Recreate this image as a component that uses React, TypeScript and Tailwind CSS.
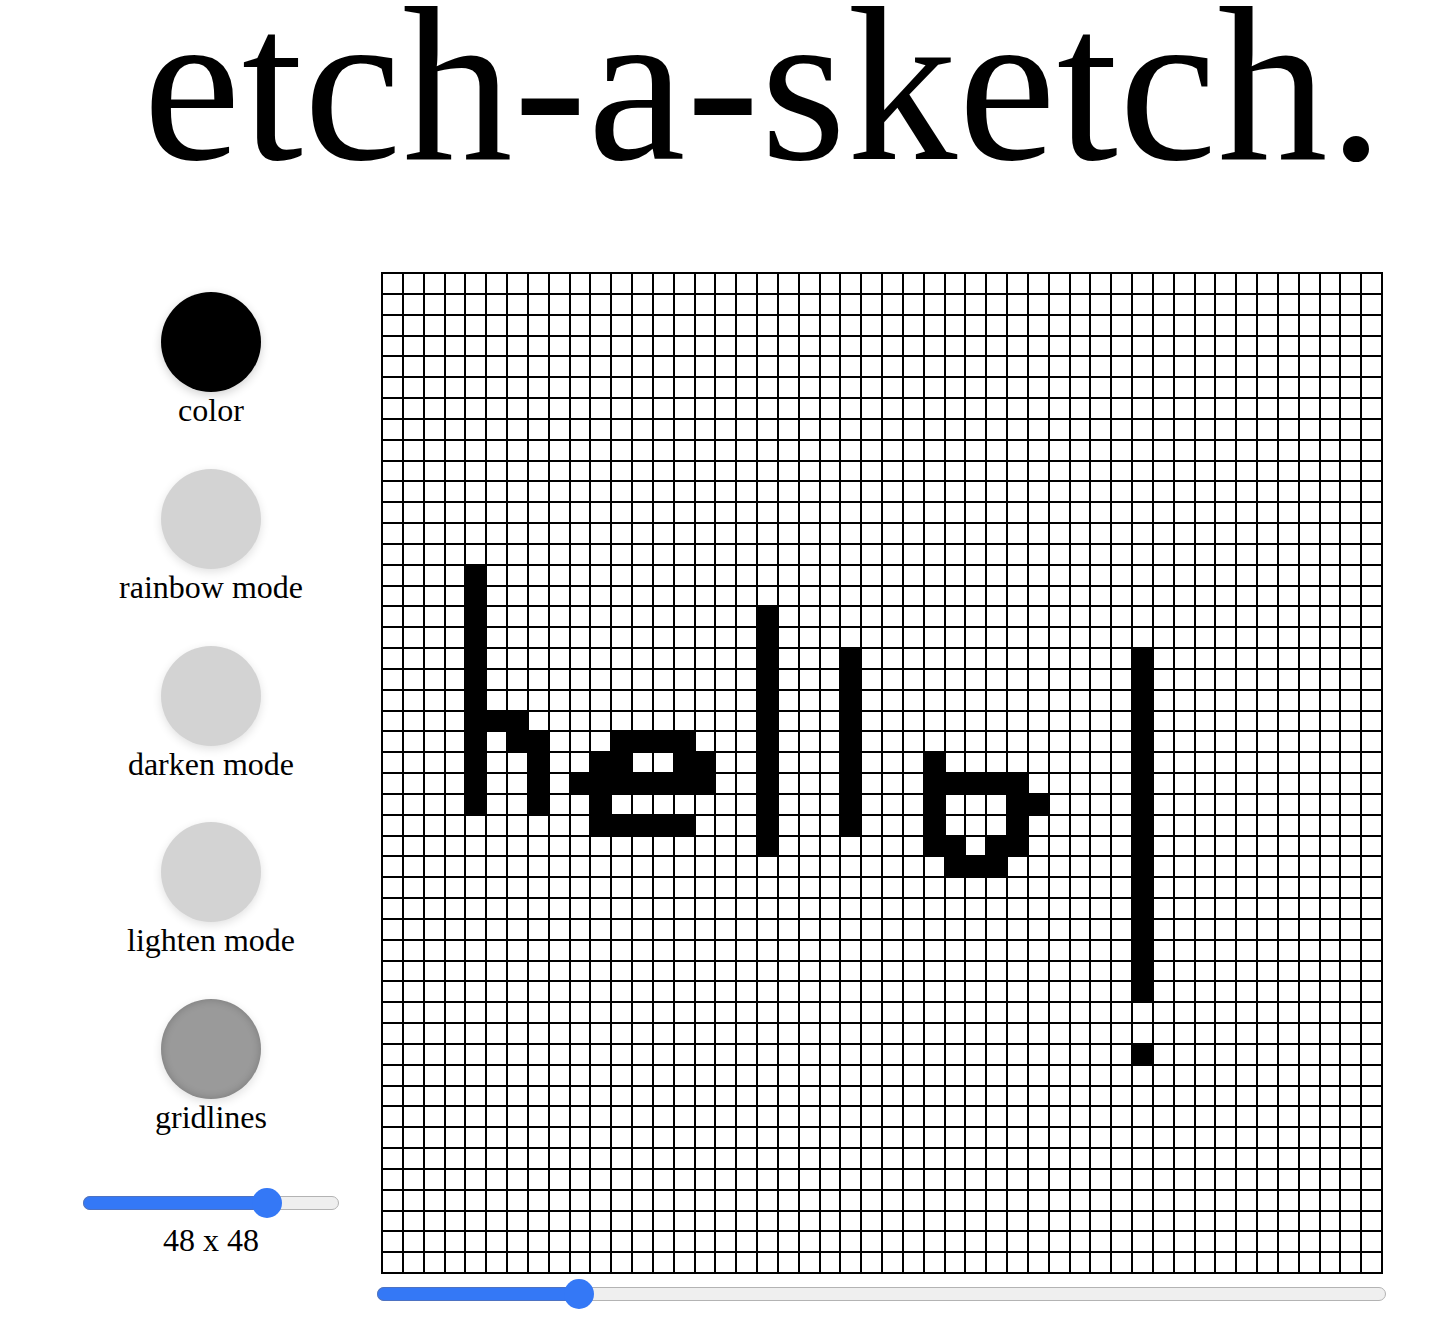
const SIZE = 48;

// drawn cells, as [row, col]
const inked = new Set<string>();
const ink = (r: number, c: number) => inked.add(`${r}-${c}`);
const vline = (c: number, r0: number, r1: number) => {
	for (let r = r0; r <= r1; r++) ink(r, c);
};
const hline = (r: number, c0: number, c1: number) => {
	for (let c = c0; c <= c1; c++) ink(r, c);
};

// h
vline(4, 14, 25);
hline(21, 5, 6);
hline(22, 6, 7);
vline(7, 23, 25);
// e
hline(22, 11, 14);
[10, 11, 14, 15].forEach((c) => ink(23, c));
hline(24, 9, 15);
ink(25, 10);
hline(26, 10, 14);
// l l
vline(18, 16, 27);
vline(22, 18, 26);
// o
ink(23, 26);
hline(24, 26, 30);
[26, 30, 31].forEach((c) => ink(25, c));
[26, 30].forEach((c) => ink(26, c));
[26, 27, 29, 30].forEach((c) => ink(27, c));
hline(28, 27, 29);
// !
vline(36, 18, 34);
ink(37, 36);

const modes = [
	{ label: 'color', className: 'bg-black shadow-[0_3px_10px_rgba(0,0,0,0.18)]' },
	{ label: 'rainbow mode', className: 'bg-[#d3d3d3] shadow-[0_3px_10px_rgba(0,0,0,0.12)]' },
	{ label: 'darken mode', className: 'bg-[#d3d3d3] shadow-[0_3px_10px_rgba(0,0,0,0.12)]' },
	{ label: 'lighten mode', className: 'bg-[#d3d3d3] shadow-[0_3px_10px_rgba(0,0,0,0.12)]' },
	{
		label: 'gridlines',
		className: 'bg-[#9a9a9a] shadow-[inset_0_0_8px_rgba(0,0,0,0.22),0_3px_10px_rgba(0,0,0,0.12)]',
	},
];

const Slider = ({ className, fill, thumb }: { className: string; fill: string; thumb: string }) => (
	<div className={`relative h-[30px] flex items-center ${className}`}>
		<div className="relative w-full h-[14px] rounded-full bg-[#efefef] border border-[#b3b3b3]">
			<div className={`absolute -left-px -top-px -bottom-px rounded-l-full bg-[#3478f6] border border-[#4d72c2] border-r-0 ${fill}`} />
		</div>
		<div className={`absolute top-0 w-[30px] h-[30px] rounded-full bg-[#3478f6] -translate-x-1/2 ${thumb}`} />
	</div>
);

export default function App() {
	return (
		<div className="min-h-screen bg-white text-black font-['Liberation_Serif','Times_New_Roman',serif]">
			<h1 className="text-[220px] leading-[166px] pl-[143px] pt-[2px] tracking-[1px] whitespace-nowrap">
				etch-a-sketch.
			</h1>

			<div className="flex mt-[104px] pl-[83px]">
				{/* controls */}
				<div className="w-[256px] flex flex-col items-center pt-[20px]">
					<div className="flex flex-col items-center gap-[40px]">
						{modes.map((m) => (
							<button key={m.label} type="button" className="flex flex-col items-center">
								<span className={`block w-[100px] h-[100px] rounded-full ${m.className}`} />
								<span className="text-[32px] leading-[36.8px]">{m.label}</span>
							</button>
						))}
					</div>
					<Slider className="w-[256px] mt-[52px]" fill="w-[72%]" thumb="left-[72%]" />
					<div className="mt-[4px] text-[32px] leading-[36.8px]">48 x 48</div>
				</div>

				{/* sketch pad */}
				<div className="ml-[42px]">
					<div className="grid grid-cols-[repeat(48,minmax(0,1fr))] grid-rows-[repeat(48,minmax(0,1fr))] w-[1002px] h-[1002px] border border-black">
						{Array.from({ length: SIZE * SIZE }, (_, i) => {
							const r = Math.floor(i / SIZE);
							const c = i % SIZE;
							return (
								<div
									key={i}
									className={`border border-black ${inked.has(`${r}-${c}`) ? 'bg-black' : 'bg-white'}`}
								/>
							);
						})}
					</div>
					<Slider className="w-[1009px] -ml-[4px] mt-[5px]" fill="w-[20%]" thumb="left-[20%]" />
				</div>
			</div>
		</div>
	);
}
